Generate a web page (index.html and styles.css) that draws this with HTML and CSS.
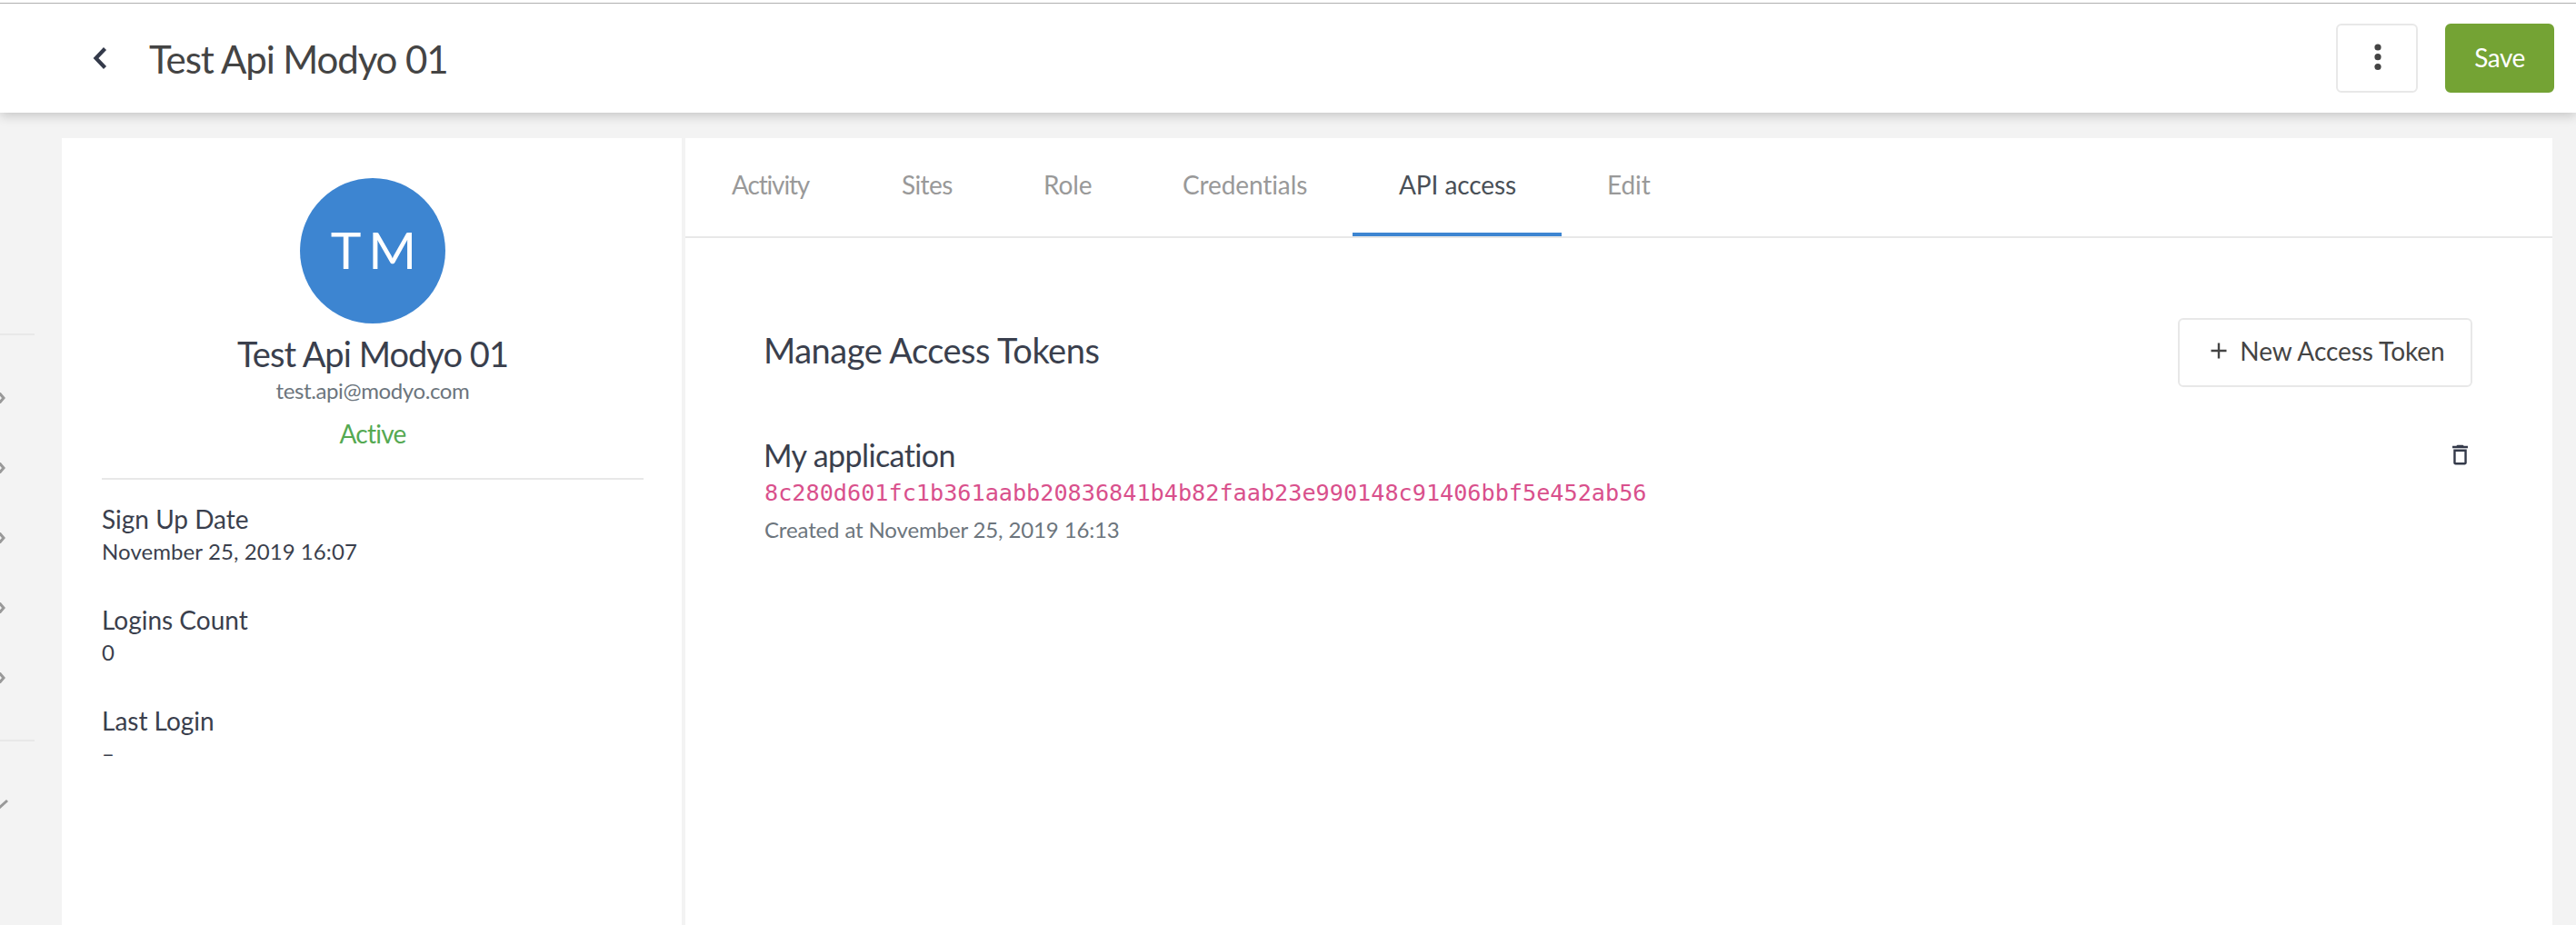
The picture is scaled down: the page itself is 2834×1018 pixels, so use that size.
FILE: index.html
```html
<!DOCTYPE html>
<html lang="en">
<head>
<meta charset="utf-8">
<title>Test Api Modyo 01</title>
<link rel="stylesheet" href="styles.css">
</head>
<body>
<header class="topbar">
  <svg class="back" viewBox="0 0 16 26"><path d="M13.5 2.5 3.5 13l10 10.5" fill="none" stroke="#343a4a" stroke-width="4.2"/></svg>
  <h1 class="title">Test Api Modyo 01</h1>
  <button class="btn btn-menu" aria-label="More">
    <svg width="8" height="30" viewBox="0 0 8 30" fill="#444"><circle cx="4" cy="4" r="3.6"/><circle cx="4" cy="14.7" r="3.6"/><circle cx="4" cy="25.5" r="3.6"/></svg>
  </button>
  <button class="btn btn-save">Save</button>
</header>
<div class="body">
  <nav class="rail">
    <div class="rail-group">
      <svg class="arrow" viewBox="0 0 8 12"><path d="M-2-1 4 6l-6 7"/></svg>
      <svg class="arrow" viewBox="0 0 8 12"><path d="M-2-1 4 6l-6 7"/></svg>
      <svg class="arrow" viewBox="0 0 8 12"><path d="M-2-1 4 6l-6 7"/></svg>
      <svg class="arrow" viewBox="0 0 8 12"><path d="M-2-1 4 6l-6 7"/></svg>
      <svg class="arrow" viewBox="0 0 8 12"><path d="M-2-1 4 6l-6 7"/></svg>
    </div>
    <svg class="collapse" viewBox="0 0 10 12"><path d="M8 2-2 11"/></svg>
  </nav>
  <main class="card">
    <aside class="profile">
      <div class="avatar">T M</div>
      <div class="name">Test Api Modyo 01</div>
      <div class="email">test.api@modyo.com</div>
      <div class="status">Active</div>
      <dl class="facts">
        <div><dt>Sign Up Date</dt><dd>November 25, 2019 16:07</dd></div>
        <div><dt>Logins Count</dt><dd>0</dd></div>
        <div><dt>Last Login</dt><dd>–</dd></div>
      </dl>
    </aside>
    <section class="pane">
      <div class="tabs">
        <a class="tab tab-activity">Activity</a>
        <a class="tab tab-sites">Sites</a>
        <a class="tab">Role</a>
        <a class="tab">Credentials</a>
        <a class="tab active">API access</a>
        <a class="tab">Edit</a>
      </div>
      <div class="content">
        <div class="content-head">
          <h2 class="heading">Manage Access Tokens</h2>
          <button class="btn btn-new">
            <svg width="18" height="18" viewBox="0 0 18 18"><path d="M9 .5v17M.5 9h17" stroke="#444" stroke-width="2.4"/></svg>
            New Access Token
          </button>
        </div>
        <div class="token">
          <div>
            <div class="app">My application</div>
            <code class="key">8c280d601fc1b361aabb20836841b4b82faab23e990148c91406bbf5e452ab56</code>
            <div class="created">Created at November 25, 2019 16:13</div>
          </div>
          <svg class="trash" viewBox="0 0 24 24" fill="#343a4a"><path d="M6 19.2c0 1.1.8 1.8 1.9 1.8h8.2c1.1 0 1.9-.7 1.9-1.8V7H6v12.2zM8 9h8v10H8V9zm7.5-5-1-1h-5l-1 1H5v2h14V4h-3.5z"/></svg>
        </div>
      </div>
    </section>
  </main>
</div>
</body>
</html>
```
FILE: styles.css
```css
* { box-sizing: border-box; }

body {
  margin: 0;
  height: 1018px;
  overflow: hidden;
  display: flex;
  flex-direction: column;
  padding-top: 3px;
  background: #fff;
  color: #3a3f4d;
  font-family: Lato, sans-serif;
  font-size: 28px;
}

h1, h2, dl, dd { margin: 0; font-weight: 400; }

/* Top bar */
.topbar {
  position: relative;
  flex: none;
  height: 121px;
  display: flex;
  align-items: center;
  padding: 0 24px 0 102px;
  border-top: 1px solid #b0b0b0;
  background: #fff;
  box-shadow: 0 3px 12px rgba(0, 0, 0, .2);
  clip-path: inset(0 0 -24px 0);
}
.back { width: 16px; height: 26px; }
.title {
  flex: 1;
  margin-left: 46px;
  padding-top: 2px;
  font-size: 42px;
  letter-spacing: -1.1px;
  color: #444;
}
.btn {
  height: 76px;
  display: flex;
  align-items: center;
  justify-content: center;
  padding: 0 0 2px;
  border: 2px solid #e8e8e8;
  border-radius: 6px;
  background: #fff;
  color: #444;
  font: inherit;
}
.btn-menu { width: 90px; padding-left: 2px; margin-right: 30px; }
.btn-save {
  width: 120px;
  border-color: #74a334;
  background: #74a334;
  color: #fff;
  letter-spacing: -.5px;
}

/* Page body */
.body {
  flex: 1;
  display: flex;
  padding: 28px 26px 0 0;
  background: #f3f3f3;
}
.rail { width: 68px; padding-top: 215px; }
.rail-group {
  width: 38px;
  height: 449px;
  padding-top: 63px;
  display: flex;
  flex-direction: column;
  gap: 65px;
  border: solid #e8e8e8;
  border-width: 2px 0;
}
.arrow, .collapse { display: block; flex: none; fill: none; stroke: #999; stroke-width: 3; }
.arrow { width: 8px; height: 12px; }
.collapse { width: 10px; height: 12px; margin-top: 63px; }

.card { flex: 1; display: flex; background: #fff; }

/* Profile column */
.profile {
  width: 686px;
  padding: 44px 42px 0 44px;
  border-right: 4px solid #f3f3f3;
  text-align: center;
}
.avatar {
  width: 160px;
  height: 160px;
  margin: 0 auto;
  padding: 0 0 4px 2px;
  display: flex;
  align-items: center;
  justify-content: center;
  border-radius: 50%;
  background: #3d85d1;
  color: #fff;
  font-size: 57px;
  word-spacing: -5px;
}
.name {
  margin-top: 10px;
  font-size: 38px;
  line-height: 46px;
  letter-spacing: -.95px;
}
.email {
  font-size: 24px;
  line-height: 36px;
  letter-spacing: -.38px;
  color: #6c757d;
}
.status {
  margin-top: 10px;
  line-height: 38px;
  letter-spacing: -.75px;
  color: #55a952;
}
.facts {
  display: grid;
  gap: 39px;
  margin-top: 30px;
  padding-top: 25px;
  border-top: 2px solid #e8e8e8;
  text-align: left;
  line-height: 36px;
}
.facts dd { font-size: 24px; letter-spacing: .08px; }

/* Tabs */
.pane { flex: 1; }
.tabs {
  height: 110px;
  display: grid;
  grid-template-columns: 188px 156px 153px 237px 230px 148px;
  border-bottom: 2px solid #e8e8e8;
}
.tab {
  display: flex;
  align-items: center;
  padding: 0 0 6px 50px;
  color: #999;
  letter-spacing: -.1px;
}
.tab-activity { padding-left: 51px; letter-spacing: -1.15px; }
.tab-sites { letter-spacing: -.6px; }
.tab.active {
  padding-bottom: 2px;
  padding-left: 51px;
  border-bottom: 4px solid #3d85d1;
  color: #495057;
}

/* Tokens */
.content { padding: 88px 88px 0 86px; }
.content-head { display: flex; align-items: center; justify-content: space-between; }
.heading { padding-bottom: 6px; font-size: 38px; letter-spacing: -.5px; }
.btn-new { width: 324px; padding: 0 0 4px 6px; gap: 14px; letter-spacing: -.06px; }
.token {
  display: flex;
  justify-content: space-between;
  align-items: flex-start;
  margin-top: 55px;
}
.app { font-size: 34px; line-height: 40px; letter-spacing: -.6px; }
.key {
  display: block;
  margin-left: 1px;
  font: 25.2px/44px "DejaVu Sans Mono", monospace;
  color: #d9508c;
}
.created {
  margin-left: 1px;
  font-size: 24px;
  line-height: 36px;
  letter-spacing: -.13px;
  color: #6c757d;
}
.trash { width: 29px; height: 29px; margin: 5px -1px 0 0; }
```
